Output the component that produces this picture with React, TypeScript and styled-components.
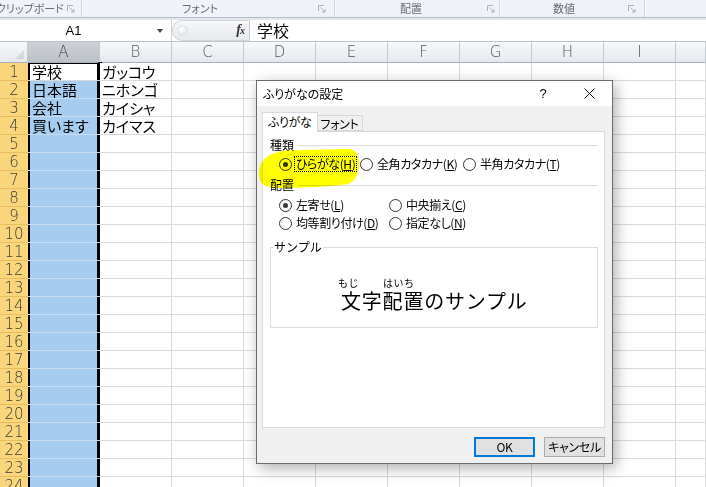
import styled, { createGlobalStyle, css } from 'styled-components';

const GlobalStyle = createGlobalStyle`
  html, body {
    margin: 0;
    padding: 0;
    background: #fff;
    overflow: hidden;
  }
  * {
    box-sizing: border-box;
  }
`;

const JP = `'Noto Sans CJK JP', 'Noto Sans', sans-serif`;

const Page = styled.div`
  position: relative;
  width: 706px;
  height: 487px;
  overflow: hidden;
  background: #fff;
  font-family: ${JP};
`;

/* ---------- ribbon group labels ---------- */

const RibbonLabels = styled.div`
  display: flex;
  height: 18px;
  background: #eff2f6;
  border-bottom: 1px solid #b4bcc6;
`;

const RibbonGroup = styled.div<{ $w: number; $pad: number }>`
  width: ${({ $w }) => $w}px;
  flex: none;
  display: flex;
  align-items: center;
  padding-right: ${({ $pad }) => $pad}px;
  border-right: 1px solid #cdd3da;
  box-shadow: 1px 0 0 #fafbfc;
`;

const GroupLabel = styled.span<{ $left?: boolean }>`
  flex: 1;
  text-align: ${({ $left }) => ($left ? 'left' : 'center')};
  margin-left: ${({ $left }) => ($left ? '-4px' : '0')};
  font: 11px/17px ${JP};
  font-feature-settings: 'palt';
  color: #656c75;
  white-space: nowrap;
`;

const Launcher = () => (
  <svg width="8" height="8" viewBox="0 0 8 8" fill="none" aria-hidden="true">
    <path d="M0.5 6V0.5H6" stroke="#a9b0b8" />
    <path d="M2.5 2.5L7 7M7 4v3H4" stroke="#a9b0b8" />
  </svg>
);

/* ---------- formula bar ---------- */

const FormulaArea = styled.div`
  padding-top: 2px;
  background: #e3e8ee;
  border-bottom: 1px solid #bcc3cb;
`;

const FormulaBar = styled.div`
  display: flex;
  height: 21px;
  background: #fff;
`;

const NameBox = styled.div`
  width: 172px;
  flex: none;
  display: flex;
  align-items: center;
  border-right: 1px solid #d0d5db;
`;

const NameText = styled.span`
  flex: 1;
  text-align: center;
  font: 13px/20px 'Liberation Sans', sans-serif;
  color: #000;
  padding-right: 10px;
`;

const DropArrow = styled.span`
  width: 0;
  height: 0;
  margin-right: 8px;
  border-left: 3.5px solid transparent;
  border-right: 3.5px solid transparent;
  border-top: 4px solid #444;
`;

const Grip = styled.div`
  width: 78px;
  flex: none;
  display: flex;
  align-items: center;
  background: linear-gradient(#f6f7f9, #e7eaee);
  border-radius: 10px 0 0 10px;
  border: 1px solid #d2d7dd;
  border-right-color: #c6ccd3;
`;

const GripKnob = styled.span`
  width: 11px;
  height: 11px;
  margin-left: 4px;
  border-radius: 50%;
  background: radial-gradient(circle at 40% 35%, #ffffff, #d9dde2);
  border: 1px solid #dde1e6;
`;

const Fx = styled.span`
  margin-left: auto;
  margin-right: 5px;
  font: italic bold 14px/18px 'Liberation Serif', serif;
  color: #333;
  letter-spacing: -1px;

  small {
    font-size: 10px;
  }
`;

const FormulaInput = styled.div`
  flex: 1;
  padding-left: 7px;
  font: 16px/20px ${JP};
  color: #000;
`;

/* ---------- sheet grid ---------- */

const Sheet = styled.div`
  display: grid;
  grid-template-columns: 28px repeat(9, 72px) 1fr;
  grid-template-rows: 21px;
  grid-auto-rows: 18px;
`;

const Corner = styled.div`
  position: relative;
  background: linear-gradient(#f6f8fa, #e6eaee);
  border-right: 1px solid #c5cad0;
  border-bottom: 1px solid #a7afb8;

  &::after {
    content: '';
    position: absolute;
    right: 3px;
    bottom: 3px;
    border-left: 9px solid transparent;
    border-bottom: 9px solid #d5d9de;
  }
`;

const ColHead = styled.div<{ $sel?: boolean }>`
  text-align: center;
  font: 15px/21px 'DejaVu Sans', sans-serif;
  font-weight: 200;
  color: #555;
  background: linear-gradient(#f6f8fa, #e5e9ee);
  border-right: 1px solid #c5cad0;
  border-bottom: 1px solid #a7afb8;
  ${({ $sel }) =>
    $sel &&
    css`
      background: linear-gradient(#cdd1d6, #bcc1c7);
      color: #3c3c3c;
    `}
`;

const RowHead = styled.div`
  text-align: center;
  font: 15px/19px 'DejaVu Sans', sans-serif;
  font-weight: 200;
  color: #3a3a3a;
  background: #f9d57c;
  border-bottom: 1px solid #e6bd62;
`;

const Cell = styled.div<{ $sel?: boolean; $active?: boolean }>`
  position: relative;
  padding-left: 2px;
  font: 15px/18px ${JP};
  font-feature-settings: 'palt';
  color: #000;
  white-space: nowrap;
  background: #fff;
  border-right: 1px solid #d9d9d9;
  border-bottom: 1px solid #d9d9d9;
  ${({ $sel, $active }) =>
    $sel &&
    css`
      padding-left: 4px;
      background: ${$active ? '#fff' : '#a6cdf0'};
      border-right: none;
      border-bottom-color: ${$active ? '#d9d9d9' : '#c7def4'};
      box-shadow: inset 2px 0 0 #000, inset -3px 0 0 #000
        ${$active ? ', inset 0 1px 0 #000' : ''};
    `}
`;

const FillHandle = styled.span`
  position: absolute;
  right: -2px;
  top: -1px;
  width: 4px;
  height: 5px;
  background: #000;
`;

/* ---------- dialog ---------- */

const Dialog = styled.div`
  position: absolute;
  left: 256px;
  top: 80px;
  width: 357px;
  height: 384px;
  display: flex;
  flex-direction: column;
  background: #f0f0f0;
  border: 1px solid #6b6b6b;
  box-shadow: 3px 4px 14px rgba(0, 0, 0, 0.32);
  font: 12px/14px ${JP};
  font-feature-settings: 'palt';
  color: #000;
`;

const TitleBar = styled.div`
  height: 25px;
  flex: none;
  display: flex;
  align-items: center;
  background: #fff;
`;

const Title = styled.span`
  flex: 1;
  padding-left: 6px;
  font-size: 12px;
`;

const TitleButton = styled.span`
  width: 46px;
  height: 25px;
  display: inline-flex;
  align-items: center;
  justify-content: center;
  font: 13px/1 'Liberation Sans', sans-serif;
`;

const Body = styled.div`
  flex: 1;
  display: flex;
  flex-direction: column;
  padding: 6px 7px 0 5px;
`;

const TabRow = styled.div`
  display: flex;
  align-items: flex-end;
  height: 19px;
`;

const Tab = styled.div<{ $active?: boolean }>`
  position: relative;
  z-index: 1;
  height: ${({ $active }) => ($active ? '20px' : '16px')};
  margin-bottom: ${({ $active }) => ($active ? '-1px' : '0')};
  padding: ${({ $active }) => ($active ? '2px 5px 0 5px' : '1px 3px 0 3px')};
  background: ${({ $active }) => ($active ? '#fff' : '#f0f0f0')};
  border: 1px solid #d9d9d9;
  border-bottom: ${({ $active }) => ($active ? 'none' : '1px solid #d9d9d9')};
  border-left: ${({ $active }) => ($active ? '1px solid #d9d9d9' : 'none')};
  letter-spacing: -0.3px;
  white-space: nowrap;
`;

const Panel = styled.div`
  height: 297px;
  flex: none;
  background: #fff;
  border: 1px solid #d9d9d9;
  padding: 6px 6px 0 7px;
`;

const SectionHead = styled.div<{ $top?: number }>`
  display: flex;
  align-items: center;
  height: 14px;
  margin-top: ${({ $top }) => $top ?? 0}px;

  &::after {
    content: '';
    flex: 1;
    height: 1px;
    margin-left: 4px;
    background: #dcdcdc;
  }
`;

const RadioRow = styled.div<{ $top: number }>`
  display: flex;
  align-items: center;
  height: 16px;
  margin-top: ${({ $top }) => $top}px;
  padding-left: 9px;
`;

const RadioItem = styled.label<{ $w?: number }>`
  display: inline-flex;
  align-items: center;
  width: ${({ $w }) => ($w ? `${$w}px` : 'auto')};
  flex: none;
  gap: 3px;
  white-space: nowrap;
`;

const RadioDot = styled.span<{ $on?: boolean }>`
  position: relative;
  width: 13px;
  height: 13px;
  flex: none;
  border-radius: 50%;
  border: 1px solid #333;
  background: #fff;

  ${({ $on }) =>
    $on &&
    css`
      &::after {
        content: '';
        position: absolute;
        left: 3px;
        top: 3px;
        width: 5px;
        height: 5px;
        border-radius: 50%;
        background: #333;
      }
    `}
`;

const RadioLabel = styled.span<{ $focus?: boolean }>`
  padding: 0 1px;
  letter-spacing: -0.4px;
  ${({ $focus }) =>
    $focus &&
    css`
      outline: 1px dotted #000;
    `}
`;

const SampleBox = styled.fieldset`
  margin: 9px 0 0 0;
  width: 328px;
  height: 88px;
  padding: 0;
  border: 1px solid #dcdcdc;
  min-width: 0;
`;

const SampleLegend = styled.legend`
  padding: 0 1px;
  margin-left: 2px;
  font: 12px/14px ${JP};
`;

const Sample = styled.div`
  padding: 23px 0 0 70px;
`;

const Furigana = styled.div`
  display: flex;
  height: 12px;
  font: 10px/12px ${JP};
  letter-spacing: 0.5px;
  margin-left: -3px;
`;

const RubyText = styled.span<{ $w?: number }>`
  width: ${({ $w }) => ($w ? `${$w}px` : 'auto')};
  flex: none;
`;

const SampleText = styled.div`
  font: 20px/24px ${JP};
  font-feature-settings: normal;
  letter-spacing: 0.8px;
  white-space: nowrap;
`;

const ButtonRow = styled.div`
  display: flex;
  justify-content: flex-end;
  gap: 9px;
  margin-top: 9px;
`;

const Button = styled.button<{ $primary?: boolean }>`
  width: 61px;
  height: 20px;
  padding: 0;
  background: #e1e1e1;
  border: ${({ $primary }) => ($primary ? '2px solid #0078d7' : '1px solid #adadad')};
  font: 12px/14px ${JP};
  font-feature-settings: 'palt';
  letter-spacing: -0.3px;
  white-space: nowrap;
  color: #000;
`;

const Highlight = styled.svg`
  position: absolute;
  left: 258px;
  top: 148px;
  mix-blend-mode: multiply;
  pointer-events: none;
`;

const columns = ['A', 'B', 'C', 'D', 'E', 'F', 'G', 'H', 'I', ''];
const data: [string, string][] = [
  ['学校', 'ガッコウ'],
  ['日本語', 'ニホンゴ'],
  ['会社', 'カイシャ'],
  ['買います', 'カイマス'],
];

function Radio({ on, focus, children, w }: { on?: boolean; focus?: boolean; children: React.ReactNode; w?: number }) {
  return (
    <RadioItem $w={w}>
      <RadioDot $on={on} />
      <RadioLabel $focus={focus}>{children}</RadioLabel>
    </RadioItem>
  );
}

function Row({ r }: { r: number }) {
  const entry = data[r - 1];
  return (
    <>
      <RowHead>{r}</RowHead>
      {columns.map((c, i) => (
        <Cell key={i} $sel={c === 'A'} $active={c === 'A' && r === 1}>
          {c === 'A' && entry ? entry[0] : null}
          {c === 'B' && entry ? entry[1] : null}
          {c === 'A' && r === 1 ? <FillHandle /> : null}
        </Cell>
      ))}
    </>
  );
}

export default function App() {
  const rows = Array.from({ length: 24 }, (_, i) => i + 1);

  return (
    <Page>
      <GlobalStyle />
      <RibbonLabels>
        <RibbonGroup $w={82} $pad={6}>
          <GroupLabel $left>クリップボード</GroupLabel>
          <Launcher />
        </RibbonGroup>
        <RibbonGroup $w={253} $pad={8}>
          <GroupLabel>フォント</GroupLabel>
          <Launcher />
        </RibbonGroup>
        <RibbonGroup $w={165} $pad={4}>
          <GroupLabel>配置</GroupLabel>
          <Launcher />
        </RibbonGroup>
        <RibbonGroup $w={145} $pad={8}>
          <GroupLabel>数値</GroupLabel>
          <Launcher />
        </RibbonGroup>
      </RibbonLabels>

      <FormulaArea>
        <FormulaBar>
          <NameBox>
            <NameText>A1</NameText>
            <DropArrow />
          </NameBox>
          <Grip>
            <GripKnob />
            <Fx>
              f<small>x</small>
            </Fx>
          </Grip>
          <FormulaInput>学校</FormulaInput>
        </FormulaBar>
      </FormulaArea>

      <Sheet>
        <Corner />
        {columns.map((c, i) => (
          <ColHead key={`h${i}`} $sel={c === 'A'}>
            {c}
          </ColHead>
        ))}
        {rows.map((r) => (
          <Row key={r} r={r} />
        ))}
      </Sheet>

      <Dialog>
        <TitleBar>
          <Title>ふりがなの設定</Title>
          <TitleButton>?</TitleButton>
          <TitleButton>
            <svg width="11" height="11" viewBox="0 0 11 11" aria-hidden="true">
              <path d="M0.5 0.5l10 10M10.5 0.5l-10 10" stroke="#111" strokeWidth="1" />
            </svg>
          </TitleButton>
        </TitleBar>
        <Body>
          <TabRow>
            <Tab $active>ふりがな</Tab>
            <Tab>フォント</Tab>
          </TabRow>
          <Panel>
            <SectionHead>種類</SectionHead>
            <RadioRow $top={4}>
              <Radio on focus w={81}>
                ひらがな(<u>H</u>)
              </Radio>
              <Radio w={103}>
                全角カタカナ(<u>K</u>)
              </Radio>
              <Radio>
                半角カタカナ(<u>T</u>)
              </Radio>
            </RadioRow>
            <SectionHead $top={6}>配置</SectionHead>
            <RadioRow $top={5}>
              <Radio on w={110}>
                左寄せ(<u>L</u>)
              </Radio>
              <Radio>
                中央揃え(<u>C</u>)
              </Radio>
            </RadioRow>
            <RadioRow $top={2}>
              <Radio w={110}>
                均等割り付け(<u>D</u>)
              </Radio>
              <Radio>
                指定なし(<u>N</u>)
              </Radio>
            </RadioRow>
            <SampleBox>
              <SampleLegend>サンプル</SampleLegend>
              <Sample>
                <Furigana>
                  <RubyText $w={45}>もじ</RubyText>
                  <RubyText>はいち</RubyText>
                </Furigana>
                <SampleText>文字配置のサンプル</SampleText>
              </Sample>
            </SampleBox>
          </Panel>
          <ButtonRow>
            <Button $primary>OK</Button>
            <Button>キャンセル</Button>
          </ButtonRow>
        </Body>
      </Dialog>

      <Highlight width="102" height="41" viewBox="0 0 102 41" aria-hidden="true">
        <path
          d="M5 13 C10 5 24 2 40 2 L90 1 C97 1 101 6 101 15 C101 26 98 33 90 36 C70 39 40 40 18 40 C7 40 1 35 1 27 C1 21 2 16 5 13 Z"
          fill="#ffff00"
        />
      </Highlight>
    </Page>
  );
}
